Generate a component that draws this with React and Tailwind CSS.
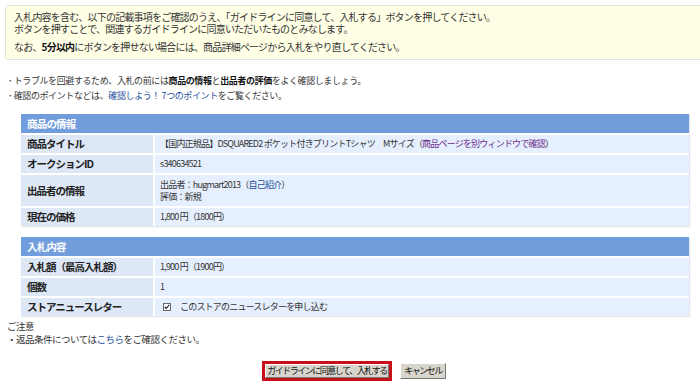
const font = { fontFamily: '"Noto Sans CJK JP", "Liberation Sans", sans-serif' };

const Row = ({ label, children, tall }) => (
    <div className={`flex border-t-2 border-white ${tall ? "h-[33px]" : "h-[20px]"}`}>
        <div className="w-[134px] shrink-0 bg-[#dde7f6] pl-[6px] flex items-center font-bold text-[10.5px] tracking-[-1px] text-[#222] border-r-2 border-white">
            {label}
        </div>
        <div className="flex-1 bg-[#e6effd] pl-[5px] flex flex-col justify-center text-[9px] tracking-[-0.8px] text-[#333] leading-[12px]">
            {children}
        </div>
    </div>
);

const Section = ({ title, children }) => (
    <div className="ml-[21px] mr-[11px] shadow-[1px_1px_1px_#e3e6ea]">
        <div className="h-[19px] bg-[#719ddd] pl-[6px] flex items-center text-white font-bold text-[10.5px] tracking-[-0.8px]">
            {title}
        </div>
        {children}
    </div>
);

const btn = "bg-[#d8d5cc] border border-t-white border-l-white border-b-[#777] border-r-[#777] text-[9px] tracking-[-1.5px] leading-[12px] text-[#111] whitespace-nowrap flex items-center justify-center";

export default function App() {
    return (
        <div className="w-[700px] h-[391px] bg-white overflow-hidden text-[#333]" style={font}>
            <div className="ml-[5px] mt-[5px] mr-[-4px] h-[55px] bg-[#ffffe5] border border-[#e2e2dc] rounded-[3px] px-[8px] pt-[5px] text-[10px] tracking-[-0.8px] leading-[12px] text-[#333]">
                <p>入札内容を含む、以下の記載事項をご確認のうえ、「ガイドラインに同意して、入札する」ボタンを押してください。</p>
                <p>ボタンを押すことで、関連するガイドラインに同意いただいたものとみなします。</p>
                <p className="mt-[6px]">
                    なお、<b className="text-[#111]">5分以内</b>にボタンを押せない場合には、商品詳細ページから入札をやり直してください。
                </p>
            </div>

            <div className="mt-[13px] ml-[8px] text-[9px] tracking-[-0.4px] leading-[15px] text-[#333]">
                <p>･ トラブルを回避するため、入札の前には<b className="text-[#111]">商品の情報</b>と<b className="text-[#111]">出品者の評価</b>をよく確認しましょう。</p>
                <p>･ 確認のポイントなどは、<span className="text-[#1c4f9c]">確認しよう！ 7つのポイント</span>をご覧ください。</p>
            </div>

            <div className="mt-[11px]">
                <Section title="商品の情報">
                    <Row label="商品タイトル">
                        <p>
                            【国内正規品】DSQUARED2 ポケット付きプリントTシャツ　Mサイズ（<span className="text-[#6a2a8c]">商品ページを別ウィンドウで確認</span>）
                        </p>
                    </Row>
                    <Row label="オークションID">
                        <p>s340634521</p>
                    </Row>
                    <Row label="出品者の情報" tall>
                        <p>出品者：hugmart2013（<span className="text-[#1c4f9c]">自己紹介</span>）</p>
                        <p>評価：新規</p>
                    </Row>
                    <Row label="現在の価格">
                        <p>1,800 円（1800円）</p>
                    </Row>
                </Section>
            </div>

            <div className="mt-[11px]">
                <Section title="入札内容">
                    <Row label="入札額（最高入札額）">
                        <p>1,900 円（1900円）</p>
                    </Row>
                    <Row label="個数">
                        <p>1</p>
                    </Row>
                    <Row label="ストアニュースレター">
                        <div className="flex items-center pl-[3px]">
                            <span className="w-[8px] h-[8px] border border-[#666] bg-white flex items-center justify-center mr-[9px]">
                                <svg viewBox="0 0 8 8" className="w-[6px] h-[6px]">
                                    <path d="M1 4 L3 6 L7 1" stroke="#111" strokeWidth="1.5" fill="none" />
                                </svg>
                            </span>
                            <span>このストアのニュースレターを申し込む</span>
                        </div>
                    </Row>
                </Section>
            </div>

            <div className="mt-[4px] ml-[7px] text-[9.5px] tracking-[-0.5px] leading-[13px] text-[#333]">
                <p>ご注意</p>
                <p>・返品条件については<span className="text-[#1c4f9c]">こちら</span>をご確認ください。</p>
            </div>

            <div className="mt-[15px] flex justify-center items-center gap-[8px] pl-[8px]">
                <div className="h-[20px] w-[130px] border-[3px] border-[#c8101a] flex">
                    <div className={`flex-1 ${btn}`}>ガイドラインに同意して、入札する</div>
                </div>
                <div className={`h-[16px] w-[46px] ${btn}`}>キャンセル</div>
            </div>
        </div>
    );
}
